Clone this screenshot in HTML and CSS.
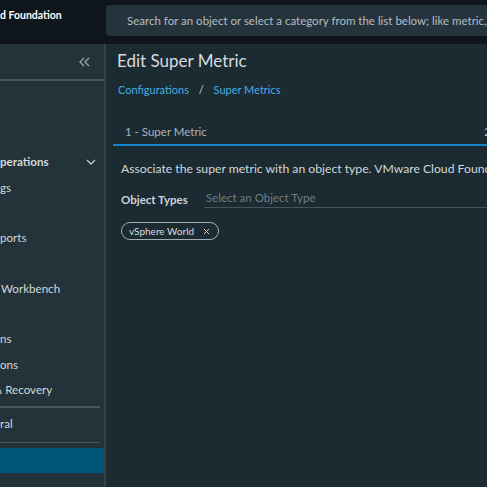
FILE: index.html
```html
<!DOCTYPE html>
<html lang="en">
<head>
    <meta charset="UTF-8">
    <meta name="viewport" content="width=device-width, initial-scale=1.0">
    <title>Edit Super Metric</title>
    <link rel="stylesheet" href="styles.css">
</head>
<body>
    <header class="topbar">
        <div class="brand">d Foundation</div>
        <div class="search">Search for an object or select a category from the list below; like metric, find, or filter</div>
    </header>
    <div class="layout">
        <nav class="sidebar">
            <div class="collapse-row">
                <svg class="collapse-icon" width="11" height="10" viewBox="0 0 11 10">
                    <path d="M5 1 L1 5 L5 9 M10 1 L6 5 L10 9" fill="none" stroke="#9aa7ae" stroke-width="1.3"/>
                </svg>
            </div>
            <div class="nav-list">
                <div class="nav-item group">perations
                    <svg class="chevron" width="10" height="6" viewBox="0 0 10 6">
                        <path d="M1 1 L5 5 L9 1" fill="none" stroke="#c4ccd0" stroke-width="1.3"/>
                    </svg>
                </div>
                <div class="nav-item">gs</div>
                <div class="nav-item"></div>
                <div class="nav-item">ports</div>
                <div class="nav-item"></div>
                <div class="nav-item"><span class="indent">Workbench</span></div>
                <div class="nav-item"></div>
                <div class="nav-item">ns</div>
                <div class="nav-item">ons</div>
                <div class="nav-item"><span class="cut">&amp;</span> Recovery</div>
            </div>
            <div class="nav-divider"></div>
            <div class="nav-item single">ral</div>
            <div class="nav-divider thin"></div>
            <div class="nav-item active"></div>
        </nav>
        <main class="content">
            <h1 class="title">Edit Super Metric</h1>
            <div class="breadcrumb">
                <a>Configurations</a>
                <span class="sep">/</span>
                <a>Super Metrics</a>
            </div>
            <div class="stepper">
                <div class="step">1 - Super Metric</div>
                <div class="step">2 - Formula</div>
            </div>
            <p class="description">Associate the super metric with an object type. VMware Cloud Foundation Operations uses it to calculate</p>
            <div class="field">
                <label>Object Types</label>
                <div class="select">Select an Object Type</div>
            </div>
            <div class="chips">
                <span class="chip">vSphere World
                    <svg width="7" height="7" viewBox="0 0 7 7">
                        <path d="M1 1 L6 6 M6 1 L1 6" stroke="#c9d1d5" stroke-width="1"/>
                    </svg>
                </span>
            </div>
        </main>
    </div>
</body>
</html>
```

FILE: styles.css
```css
*{
    box-sizing: border-box;
}
body{
    margin: 0;
    width: 487px;
    height: 487px;
    overflow: hidden;
    background-color: #1c2a32;
    font-family: Lato, "Noto Sans", sans-serif;
    color: #d3d9dc;
    white-space: nowrap;
}
.topbar{
    height: 44px;
    background-color: #0e151b;
    display: flex;
    padding-top: 5px;
}
.brand{
    width: 106px;
    color: #fff;
    font-weight: 700;
    font-size: 10.5px;
    line-height: 13px;
    padding-top: 3.5px;
}
.search{
    flex: 1;
    height: 31px;
    background-color: #25343c;
    border-radius: 4px 0 0 4px;
    padding: 0 21px;
    line-height: 31px;
    font-size: 11.5px;
    color: #b4bcc1;
    overflow: hidden;
}
.layout{
    display: flex;
    height: 443px;
}
.sidebar{
    width: 106px;
    flex: none;
    background-color: #24323a;
    border-right: 2px solid #344148;
}
.collapse-row{
    height: 37px;
    display: flex;
    justify-content: flex-end;
    align-items: center;
    padding-right: 14px;
    border-bottom: 2px solid #45565e;
}
.nav-list{
    padding-top: 68.4px;
}
.nav-item{
    height: 25.3px;
    line-height: 25.3px;
    font-size: 11.6px;
    color: #d1d8db;
}
.nav-item.group{
    font-weight: 700;
    display: flex;
    justify-content: space-between;
    align-items: center;
    padding-right: 8px;
}
.indent{
    padding-left: 1px;
}
.cut{
    margin-left: -6px;
}
.nav-divider{
    height: 2px;
    background-color: #45565e;
    margin: 4px 4px 0 0;
}
.nav-divider.thin{
    height: 1px;
    margin-top: 2.5px;
}
.nav-item.single{
    height: 31px;
    line-height: 31px;
}
.nav-item.active{
    margin-top: 5px;
    height: 25px;
    background-color: #005679;
}
.content{
    flex: 1;
    padding-left: 7px;
    min-width: 0;
}
.title{
    margin: 0;
    padding: 7px 0 0 4px;
    line-height: 20px;
    font-size: 17px;
    font-weight: 400;
    color: #d7dcdf;
}
.breadcrumb{
    padding: 12px 0 0 5px;
    line-height: 14px;
    font-size: 11px;
    color: #49aee0;
}
.breadcrumb .sep{
    color: #c8d0d4;
    margin: 0 7px;
}
.stepper{
    display: flex;
    margin-top: 27px;
    line-height: 16px;
    padding-bottom: 4px;
    border-bottom: 2px solid #1488cc;
}
.step{
    flex: none;
    width: 359px;
    padding-left: 12px;
    font-size: 11.5px;
    color: #a8b5bc;
}
.description{
    margin: 15px 0 0 8px;
    line-height: 16px;
    font-size: 12.2px;
    color: #d1d8db;
}
.field{
    display: flex;
    align-items: center;
    margin: 13px 0 0 8px;
}
.field label{
    width: 83px;
    line-height: 15px;
    font-size: 11.5px;
    font-weight: 700;
    color: #cdd4d8;
}
.select{
    flex: 1;
    line-height: 15px;
    font-size: 11.5px;
    color: #6f7d84;
    border-bottom: 1px solid #45545c;
    padding: 0 0 2px 2px;
}
.chips{
    margin: 11px 0 0 8px;
}
.chip{
    display: inline-flex;
    align-items: center;
    gap: 9px;
    height: 18px;
    padding: 0 8px 0 7px;
    border: 1px solid #a2adb3;
    border-radius: 9px;
    font-size: 10px;
    color: #d5dcdf;
}
```
